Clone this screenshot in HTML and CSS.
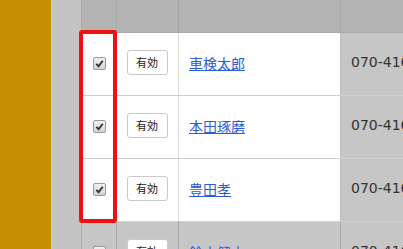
FILE: index.html
```html
<!DOCTYPE html>
<html lang="ja">
<head>
  <meta charset="UTF-8">
  <title>会員一覧</title>
  <link rel="stylesheet" href="styles.css">
</head>
<body>
  <div class="page">
    <div class="sidebar"></div>
    <div class="gutter"></div>
    <div class="list">
      <table class="members">
        <thead>
          <tr>
            <th class="col-check"></th>
            <th class="col-state"></th>
            <th class="col-name"></th>
            <th class="col-tel"></th>
          </tr>
        </thead>
        <tbody>
          <tr class="picked">
            <td class="col-check"><span class="check on"><svg viewBox="0 0 12 12"><path d="M2.5 6.5 L5 9 L9.5 3" /></svg></span></td>
            <td class="col-state"><button class="state-btn">有効</button></td>
            <td class="col-name"><a href="#">車検太郎</a></td>
            <td class="col-tel">070-4161-0000</td>
          </tr>
          <tr class="picked">
            <td class="col-check"><span class="check on"><svg viewBox="0 0 12 12"><path d="M2.5 6.5 L5 9 L9.5 3" /></svg></span></td>
            <td class="col-state"><button class="state-btn">有効</button></td>
            <td class="col-name"><a href="#">本田琢磨</a></td>
            <td class="col-tel">070-4161-0000</td>
          </tr>
          <tr class="picked">
            <td class="col-check"><span class="check on"><svg viewBox="0 0 12 12"><path d="M2.5 6.5 L5 9 L9.5 3" /></svg></span></td>
            <td class="col-state"><button class="state-btn">有効</button></td>
            <td class="col-name"><a href="#">豊田孝</a></td>
            <td class="col-tel">070-4161-0000</td>
          </tr>
          <tr>
            <td class="col-check"><span class="check"></span></td>
            <td class="col-state"><button class="state-btn">有効</button></td>
            <td class="col-name"><a href="#">鈴木健之</a></td>
            <td class="col-tel">070-4161-0000</td>
          </tr>
        </tbody>
      </table>
      <div class="highlight"></div>
    </div>
  </div>
</body>
</html>
```

FILE: styles.css
```css
body {
  margin: 0;
  overflow: hidden;
  font-family: "Noto Sans CJK JP", "DejaVu Sans", sans-serif;
}

.page {
  display: flex;
  height: 249px;
  width: 403px;
  overflow: hidden;
}

.sidebar {
  width: 51px;
  flex: none;
  background: #c49000;
}

.gutter {
  width: 30px;
  flex: none;
  background: #c4c4c4;
}

.list {
  position: relative;
  flex: none;
}

.members {
  border-collapse: collapse;
  table-layout: fixed;
  width: 420px;
}

.members th,
.members td {
  padding: 0;
  border-left: 1px solid #a9a9a9;
  background: #c6c6c6;
  vertical-align: middle;
}

.members th {
  height: 32px;
  background: #b4b4b4;
  border-bottom: 1px solid #a9a9a9;
}

.members td {
  height: 57px;
  padding-bottom: 5px;
  border-bottom: 1px solid #cfcfcf;
}

.col-check { width: 34px; text-align: center; }
.col-state { width: 61px; text-align: center; }
.col-name { width: 161px; }
.col-tel { width: 160px; }

.picked td {
  background: #fff;
  border-left-color: #dcdcdc;
}

.picked td.col-tel {
  background: #c6c6c6;
  border-left-color: #bdbdbd;
}

.check {
  display: inline-block;
  width: 11px;
  height: 11px;
  border: 1px solid #9a9a9a;
  border-radius: 2px;
  background: linear-gradient(#f0f0f0, #d4d4d4);
  vertical-align: middle;
  margin-top: -2px;
}

.check svg {
  display: block;
  width: 11px;
  height: 11px;
}

.check svg path {
  fill: none;
  stroke: #333;
  stroke-width: 2;
}

.state-btn {
  width: 41px;
  height: 25px;
  padding: 0;
  border: 1px solid #cacaca;
  border-radius: 3px;
  background: #fff;
  font-family: "Noto Sans CJK JP", sans-serif;
  font-size: 11px;
  color: #222;
  margin-left: -1px;
}

.col-name a {
  margin-left: 10px;
  font-size: 14px;
  color: #2b5bd8;
  text-decoration: underline;
}

td.col-tel {
  padding-left: 10px;
  font-family: "DejaVu Sans", sans-serif;
  font-size: 14px;
  color: #333;
  white-space: nowrap;
  overflow: hidden;
}

.highlight {
  position: absolute;
  left: -2px;
  top: 30px;
  width: 30px;
  height: 185px;
  border: 4px solid #ee1111;
  border-radius: 3px;
}
```
